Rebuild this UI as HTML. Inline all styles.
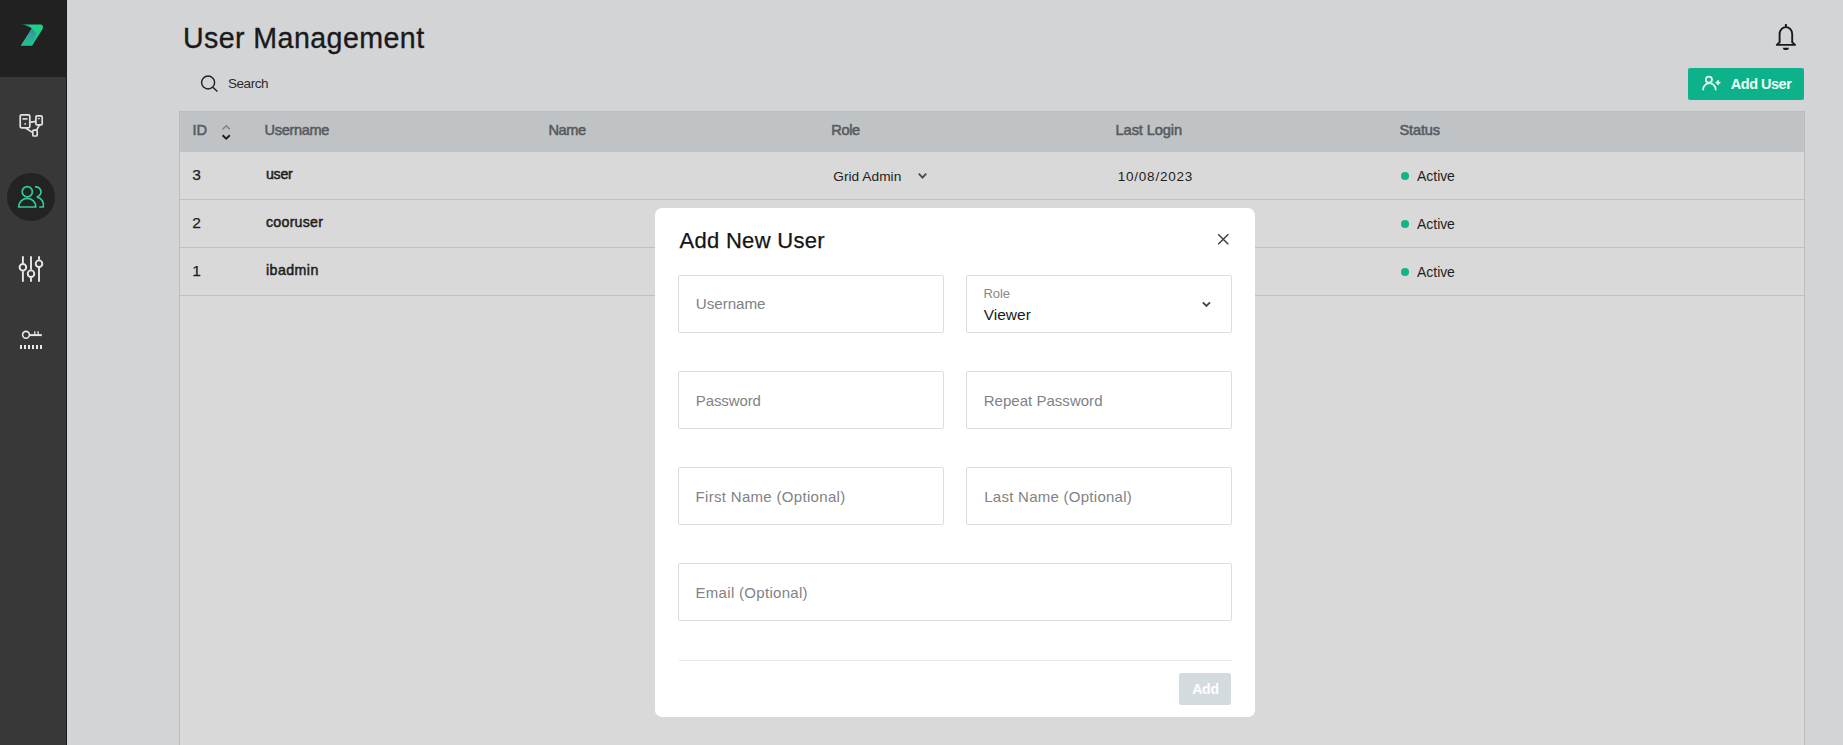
<!DOCTYPE html><html><head><meta charset="utf-8"><style>
html,body{margin:0;padding:0;}
body{width:1843px;height:745px;overflow:hidden;position:relative;background:#d3d4d6;font-family:"Liberation Sans",sans-serif;}
.t{position:absolute;white-space:nowrap;line-height:1;}
.a{position:absolute;}
svg{position:absolute;overflow:visible;}
</style></head><body>

<div class="a" style="left:0;top:0;width:66px;height:745px;background:#383838"></div>
<div class="a" style="left:0;top:0;width:66px;height:77px;background:#212121"></div>
<div class="a" style="left:66px;top:0;width:1px;height:745px;background:#1b1b1b"></div>
<svg style="left:0;top:0" width="66" height="77" viewBox="0 0 66 77">
<defs><linearGradient id="lg" x1="0" y1="0" x2="0" y2="1"><stop offset="0" stop-color="#3f8aa6"/><stop offset="1" stop-color="#1fc58c"/></linearGradient></defs>
<path d="M20.4,24.4 L40.5,24.4 Q44,24.6 42.6,29 L32.2,45.6 L21,45.6 L31.8,28.6 Q28,24.6 20.4,24.4 Z" fill="#1ece8a"/>
<path d="M31.8,28.6 Q33.5,30 36.5,33.5 L32.2,45.6 L21,45.6 Z" fill="url(#lg)"/>
</svg>
<svg style="left:0;top:100px" width="66" height="50" viewBox="0 100 66 50" fill="none" stroke="#e2e2e2" stroke-width="1.7" stroke-linejoin="round">
<rect x="20.2" y="114.9" width="9.6" height="12.9" rx="1.3"/>
<rect x="35.9" y="115.8" width="6.3" height="9.1" rx="1.2"/>
<rect x="32.8" y="130.2" width="4.4" height="5.8" rx="1"/>
<line x1="22.5" y1="118.9" x2="27.5" y2="118.9" stroke-width="1.6"/>
<rect x="24.4" y="123.1" width="1.6" height="1.6" fill="#e2e2e2" stroke="none"/>
<line x1="37.8" y1="118.6" x2="39.8" y2="118.6" stroke-width="1.2"/>
<line x1="29.8" y1="122.3" x2="35.9" y2="121.3"/>
<line x1="25.2" y1="127.8" x2="32.8" y2="132.6"/>
<line x1="39.6" y1="124.9" x2="36.4" y2="130.2"/>
</svg>
<div class="a" style="left:7px;top:173px;width:48px;height:48px;border-radius:50%;background:#232323"></div>
<svg style="left:0;top:165px" width="66" height="65" viewBox="0 165 66 65" fill="none" stroke="#2ecd9b" stroke-width="1.7" stroke-linecap="butt">
<circle cx="27.3" cy="191.7" r="5.1"/>
<path d="M18.7,207 A8.6,8.6 0 0 1 35.9,207 Z" stroke-linejoin="round"/>
<path d="M35,186.9 A5,5 0 0 1 36.8,196.9"/>
<path d="M36.8,196.9 A8.4,8.4 0 0 1 43.3,207 L39.2,207"/>
</svg>
<svg style="left:0;top:245px" width="66" height="50" viewBox="0 245 66 50" fill="none" stroke="#e8e8e8" stroke-width="1.9">
<line x1="22.9" y1="256.2" x2="22.9" y2="263.4"/><line x1="22.9" y1="271.2" x2="22.9" y2="281.8"/>
<line x1="31" y1="256.2" x2="31" y2="269.8"/><line x1="31" y1="277.6" x2="31" y2="281.8"/>
<line x1="39" y1="256.2" x2="39" y2="259.8"/><line x1="39" y1="267.6" x2="39" y2="281.8"/>
<circle cx="22.9" cy="267.3" r="3.3"/><circle cx="31" cy="273.7" r="3.3"/><circle cx="39" cy="263.7" r="3.3"/>
</svg>
<svg style="left:0;top:320px" width="66" height="45" viewBox="0 320 66 45" fill="none" stroke="#e8e8e8" stroke-width="1.6">
<circle cx="26" cy="334.8" r="3.4"/>
<line x1="29.4" y1="335.1" x2="41.8" y2="335.1" stroke-width="2"/>
<line x1="34.8" y1="331.2" x2="34.8" y2="334.5" stroke-width="1.3"/>
<line x1="38.1" y1="331.2" x2="38.1" y2="334.5" stroke-width="1.3"/>
</svg>
<div class="a" style="left:20.0px;top:345px;width:2.2px;height:4px;background:#e8e8e8"></div>
<div class="a" style="left:24.1px;top:345px;width:2.2px;height:4px;background:#e8e8e8"></div>
<div class="a" style="left:28.1px;top:345px;width:2.2px;height:4px;background:#e8e8e8"></div>
<div class="a" style="left:32.1px;top:345px;width:2.2px;height:4px;background:#e8e8e8"></div>
<div class="a" style="left:36.2px;top:345px;width:2.2px;height:4px;background:#e8e8e8"></div>
<div class="a" style="left:40.2px;top:345px;width:2.2px;height:4px;background:#e8e8e8"></div>
<div class="t" style="left:182.90px;top:23.78px;font-size:28.60px;color:#1a1a1a;letter-spacing:0.432px;-webkit-text-stroke:0.35px #1a1a1a;">User Management</div>
<svg style="left:1760px;top:15px" width="50" height="45" viewBox="1760 15 50 45" fill="none" stroke="#1a1a1a" stroke-width="1.9">
<line x1="1785.9" y1="24" x2="1785.9" y2="27.5" stroke-width="2"/>
<path d="M1779.6,42.6 L1779.6,34 A6.3,6.9 0 0 1 1792.2,34 L1792.2,42.3 L1795,44.9 L1776.8,44.9 L1779.6,42.3 Z" stroke-linejoin="round"/>
<path d="M1782.9,47.7 L1788.9,47.7 A3,2.4 0 0 1 1782.9,47.7 Z" fill="#1a1a1a" stroke="none"/>
</svg>
<svg style="left:195px;top:70px" width="30" height="30" viewBox="195 70 30 30" fill="none" stroke="#222" stroke-width="1.45">
<circle cx="208.1" cy="82.5" r="6.5"/><line x1="212.8" y1="87.2" x2="217.4" y2="91.6"/>
</svg>
<div class="t" style="left:228.00px;top:77.47px;font-size:13.50px;color:#2a2a2a;letter-spacing:-0.454px;">Search</div>
<div class="a" style="left:1688px;top:68px;width:116px;height:32px;border-radius:2px;background:#0db28a"></div>
<svg style="left:1695px;top:70px" width="30" height="30" viewBox="1695 70 30 30" fill="none" stroke="#e3fbf1" stroke-width="1.75" stroke-linecap="round">
<circle cx="1708.9" cy="79.6" r="3.1"/>
<path d="M1703.1,89.5 A6.3,6.3 0 0 1 1715.7,89.5"/>
<line x1="1716.2" y1="82.6" x2="1719.8" y2="82.6" stroke-width="1.6"/><line x1="1718" y1="80.8" x2="1718" y2="84.4" stroke-width="1.6"/>
</svg>
<div class="t" style="left:1730.80px;top:76.62px;font-size:14.50px;color:#eafff7;font-weight:bold;letter-spacing:-0.494px;">Add User</div>
<div class="a" style="left:179px;top:111px;width:1624px;height:634px;background:#d9d9d9;border-left:1px solid #b9bcbf;border-right:1px solid #b9bcbf"></div>
<div class="a" style="left:180px;top:111px;width:1624px;height:41px;background:#bfc3c6"></div>
<div class="a" style="left:179px;top:111px;width:1626px;height:1px;background:#babdc0"></div>
<div class="a" style="left:180px;top:199px;width:1624px;height:1px;background:#bec1c1"></div>
<div class="a" style="left:180px;top:247px;width:1624px;height:1px;background:#bec1c1"></div>
<div class="a" style="left:180px;top:295px;width:1624px;height:1px;background:#bec1c1"></div>
<div class="t" style="left:192.50px;top:122.94px;font-size:14.60px;color:#575b5f;-webkit-text-stroke:0.55px #575b5f;">ID</div>
<div class="t" style="left:264.50px;top:122.94px;font-size:14.60px;color:#575b5f;letter-spacing:-0.335px;-webkit-text-stroke:0.55px #575b5f;">Username</div>
<div class="t" style="left:548.50px;top:122.94px;font-size:14.60px;color:#575b5f;letter-spacing:-0.448px;-webkit-text-stroke:0.55px #575b5f;">Name</div>
<div class="t" style="left:831.30px;top:122.94px;font-size:14.60px;color:#575b5f;letter-spacing:-0.409px;-webkit-text-stroke:0.55px #575b5f;">Role</div>
<div class="t" style="left:1115.60px;top:122.94px;font-size:14.60px;color:#575b5f;letter-spacing:-0.097px;-webkit-text-stroke:0.55px #575b5f;">Last Login</div>
<div class="t" style="left:1399.50px;top:122.94px;font-size:14.60px;color:#575b5f;letter-spacing:-0.158px;-webkit-text-stroke:0.55px #575b5f;">Status</div>
<svg style="left:215px;top:118px" width="20" height="26" viewBox="215 118 20 26" fill="none" stroke-width="1.7" stroke-linecap="butt" stroke-linejoin="miter">
<path d="M222.6,129.3 L226.2,125.7 L229.8,129.3" stroke="#7d8184" stroke-width="1.5"/>
<path d="M222.6,135.2 L226.2,138.7 L229.8,135.2" stroke="#1e1e1e" stroke-width="1.9"/>
</svg>
<div class="t" style="left:192.30px;top:167.48px;font-size:15.50px;color:#1e1e1e;-webkit-text-stroke:0.25px #1e1e1e;">3</div>
<div class="t" style="left:266.00px;top:166.88px;font-size:14.20px;color:#1e1e1e;letter-spacing:-0.274px;-webkit-text-stroke:0.5px #1e1e1e;">user</div>
<div class="a" style="left:1401px;top:172px;width:8px;height:8px;border-radius:50%;background:#10b48a"></div>
<div class="t" style="left:1417.10px;top:168.95px;font-size:14.00px;color:#1e1e1e;letter-spacing:-0.065px;">Active</div>
<div class="t" style="left:192.30px;top:215.48px;font-size:15.50px;color:#1e1e1e;-webkit-text-stroke:0.25px #1e1e1e;">2</div>
<div class="t" style="left:266.00px;top:214.88px;font-size:14.20px;color:#1e1e1e;letter-spacing:0.251px;-webkit-text-stroke:0.5px #1e1e1e;">cooruser</div>
<div class="a" style="left:1401px;top:220px;width:8px;height:8px;border-radius:50%;background:#10b48a"></div>
<div class="t" style="left:1417.10px;top:216.95px;font-size:14.00px;color:#1e1e1e;letter-spacing:-0.065px;">Active</div>
<div class="t" style="left:192.30px;top:263.48px;font-size:15.50px;color:#1e1e1e;-webkit-text-stroke:0.25px #1e1e1e;">1</div>
<div class="t" style="left:266.00px;top:262.88px;font-size:14.20px;color:#1e1e1e;letter-spacing:0.446px;-webkit-text-stroke:0.5px #1e1e1e;">ibadmin</div>
<div class="a" style="left:1401px;top:268px;width:8px;height:8px;border-radius:50%;background:#10b48a"></div>
<div class="t" style="left:1417.10px;top:264.95px;font-size:14.00px;color:#1e1e1e;letter-spacing:-0.065px;">Active</div>
<div class="t" style="left:833.30px;top:170.00px;font-size:13.70px;color:#222222;letter-spacing:0.027px;">Grid Admin</div>
<svg style="left:910px;top:165px" width="20" height="20" viewBox="910 165 20 20" fill="none" stroke="#4a4a4a" stroke-width="1.9">
<path d="M918.8,173.6 L922.5,177.6 L926.2,173.6"/></svg>
<div class="t" style="left:1117.70px;top:170.07px;font-size:13.50px;color:#1e1e1e;letter-spacing:0.782px;">10/08/2023</div>
<div class="a" style="left:655px;top:208px;width:600px;height:509px;border-radius:7px;background:#ffffff"></div>
<div class="t" style="left:679.40px;top:229.87px;font-size:22.00px;color:#141414;letter-spacing:0.316px;-webkit-text-stroke:0.25px #141414;">Add New User</div>
<svg style="left:1210px;top:226px" width="26" height="26" viewBox="1210 226 26 26" fill="none" stroke="#3d4349" stroke-width="1.5">
<path d="M1218.2,234.2 L1228.3,244.3 M1228.3,234.2 L1218.2,244.3"/></svg>
<div class="a" style="left:678px;top:275px;width:266px;height:58px;border:1px solid #dcdfe1;border-radius:2px;background:#fff;box-sizing:border-box"></div>
<div class="a" style="left:966px;top:275px;width:266px;height:58px;border:1px solid #dcdfe1;border-radius:2px;background:#fff;box-sizing:border-box"></div>
<div class="a" style="left:678px;top:371px;width:266px;height:58px;border:1px solid #dcdfe1;border-radius:2px;background:#fff;box-sizing:border-box"></div>
<div class="a" style="left:966px;top:371px;width:266px;height:58px;border:1px solid #dcdfe1;border-radius:2px;background:#fff;box-sizing:border-box"></div>
<div class="a" style="left:678px;top:467px;width:266px;height:58px;border:1px solid #dcdfe1;border-radius:2px;background:#fff;box-sizing:border-box"></div>
<div class="a" style="left:966px;top:467px;width:266px;height:58px;border:1px solid #dcdfe1;border-radius:2px;background:#fff;box-sizing:border-box"></div>
<div class="a" style="left:678px;top:563px;width:554px;height:58px;border:1px solid #dcdfe1;border-radius:2px;background:#fff;box-sizing:border-box"></div>
<div class="t" style="left:695.80px;top:296.13px;font-size:15.20px;color:#7f8286;letter-spacing:-0.059px;">Username</div>
<div class="t" style="left:983.50px;top:286.79px;font-size:13.00px;color:#85888c;letter-spacing:-0.112px;">Role</div>
<div class="t" style="left:983.80px;top:306.58px;font-size:15.50px;color:#1a1a1a;letter-spacing:-0.019px;">Viewer</div>
<svg style="left:1195px;top:295px" width="20" height="20" viewBox="1195 295 20 20" fill="none" stroke="#444" stroke-width="1.9">
<path d="M1202.8,302.3 L1206.4,305.9 L1210,302.3"/></svg>
<div class="t" style="left:695.80px;top:392.90px;font-size:15.00px;color:#7f8286;letter-spacing:-0.108px;">Password</div>
<div class="t" style="left:983.70px;top:392.90px;font-size:15.00px;color:#7f8286;letter-spacing:0.029px;">Repeat Password</div>
<div class="t" style="left:695.50px;top:488.90px;font-size:15.00px;color:#7f8286;letter-spacing:0.317px;">First Name (Optional)</div>
<div class="t" style="left:984.20px;top:488.90px;font-size:15.00px;color:#7f8286;letter-spacing:0.266px;">Last Name (Optional)</div>
<div class="t" style="left:695.50px;top:584.90px;font-size:15.00px;color:#7f8286;letter-spacing:0.305px;">Email (Optional)</div>
<div class="a" style="left:679px;top:660px;width:553px;height:1px;background:#e6e8ea"></div>
<div class="a" style="left:1179px;top:673px;width:52px;height:32px;border-radius:2px;background:#d4dbdf"></div>
<div class="t" style="left:1192.20px;top:681.85px;font-size:14.00px;color:#ffffff;font-weight:bold;letter-spacing:-0.206px;">Add</div>
</body></html>
